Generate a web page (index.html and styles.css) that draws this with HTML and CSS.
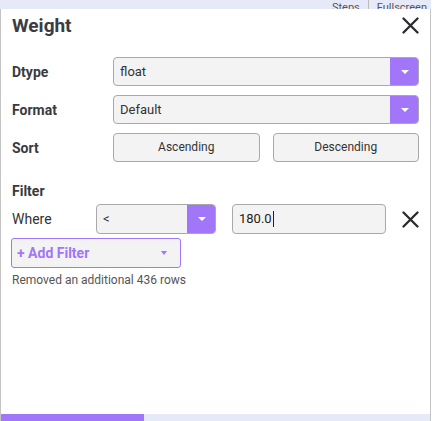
FILE: index.html
```html
<!DOCTYPE html>
<html>
<head>
<meta charset="utf-8">
<link rel="stylesheet" href="styles.css">
</head>
<body>
<div class="page">
  <div class="topbar">
    <span class="toplink">Steps</span>
    <span class="topsep"></span>
    <span class="toplink">Fullscreen</span>
  </div>
  <div class="panel">
    <div class="header">
      <h1 class="title">Weight</h1>
      <svg class="close" width="17" height="17" viewBox="0 0 17 17"><path d="M1.5 1.5L15.5 15.5M15.5 1.5L1.5 15.5" stroke="#2b2b2f" stroke-width="2.3" stroke-linecap="round"/></svg>
    </div>
    <div class="row">
      <div class="label">Dtype</div>
      <div class="select wide"><span class="seltext">float</span><span class="selbtn"><span class="tri"></span></span></div>
    </div>
    <div class="row">
      <div class="label">Format</div>
      <div class="select wide"><span class="seltext">Default</span><span class="selbtn"><span class="tri"></span></span></div>
    </div>
    <div class="row">
      <div class="label">Sort</div>
      <div class="sortbtns">
        <div class="btn">Ascending</div>
        <div class="btn">Descending</div>
      </div>
    </div>
    <div class="section">Filter</div>
    <div class="whererow">
      <div class="wlabel">Where</div>
      <div class="select op"><span class="seltext">&lt;</span><span class="selbtn"><span class="tri"></span></span></div>
      <div class="input">180.0<span class="caret"></span></div>
      <svg class="remove" width="17" height="17" viewBox="0 0 17 17"><path d="M1.5 1.5L15.5 15.5M15.5 1.5L1.5 15.5" stroke="#2b2b2f" stroke-width="2.3" stroke-linecap="round"/></svg>
    </div>
    <div class="addfilter"><span>+ Add Filter</span><span class="addtri"></span></div>
    <div class="note">Removed an additional 436 rows</div>
  </div>
  <div class="progress"><div class="progfill"></div></div>
</div>
</body>
</html>
```
FILE: styles.css
```css
html, body {
  margin: 0;
  padding: 0;
  background: #ffffff;
}
body {
  font-family: Roboto, "Noto Sans", sans-serif;
  color: #3a3a40;
  width: 438px;
  height: 421px;
  overflow: hidden;
}
.page {
  width: 431px;
  height: 421px;
  display: flex;
  flex-direction: column;
}
.topbar {
  height: 9px;
  background: #e6eaf8;
  display: flex;
  justify-content: flex-end;
  align-items: flex-end;
  gap: 8px;
  padding-right: 4px;
  overflow: hidden;
  font-size: 11px;
  line-height: 12px;
  color: #555;
}
.toplink {
  position: relative;
  top: 5px;
}
.topsep {
  width: 1px;
  height: 9px;
  background: #bbb;
}
.panel {
  flex: 1;
  border-left: 1px solid #c4c4c4;
  border-right: 1px solid #c4c4c4;
  padding: 0 11px 0 11px;
  display: flex;
  flex-direction: column;
}
.header {
  display: flex;
  justify-content: space-between;
  align-items: center;
  height: 32px;
}
.title {
  margin: 0;
  font-size: 19px;
  font-weight: 700;
  color: #3b3b42;
}
.row {
  display: flex;
  align-items: center;
  margin-top: 9px;
}
.header + .row {
  margin-top: 16px;
}
.label {
  width: 101px;
  font-size: 14px;
  font-weight: 700;
  color: #3a3a40;
}
.select {
  display: flex;
  height: 29px;
  box-sizing: border-box;
  border: 1px solid #a9a9a9;
  border-radius: 4px;
  background: #f3f3f3;
  overflow: hidden;
}
.wide {
  flex: 1;
}
.seltext {
  flex: 1;
  padding-left: 6px;
  font-size: 13px;
  line-height: 27px;
  color: #333;
}
.selbtn {
  width: 29px;
  margin: -1px -1px -1px 0;
  background: #a176f8;
  display: flex;
  align-items: center;
  justify-content: center;
}
.tri {
  width: 0;
  height: 0;
  border-left: 4px solid transparent;
  border-right: 4px solid transparent;
  border-top: 4px solid #ffffff;
}
.sortbtns {
  flex: 1;
  display: flex;
  gap: 13px;
}
.btn {
  flex: 1;
  height: 29px;
  box-sizing: border-box;
  border: 1px solid #a9a9a9;
  border-radius: 4px;
  background: #f3f3f3;
  font-size: 12px;
  line-height: 27px;
  text-align: center;
  color: #333;
}
.section {
  margin-top: 21px;
  font-size: 14px;
  font-weight: 700;
  color: #3a3a40;
}
.whererow {
  display: flex;
  align-items: center;
  margin-top: 5px;
}
.wlabel {
  width: 84px;
  font-size: 14px;
  color: #333;
}
.op {
  width: 120px;
  height: 30px;
}
.input {
  margin-left: 16px;
  width: 154px;
  height: 30px;
  box-sizing: border-box;
  border: 1px solid #a9a9a9;
  border-radius: 4px;
  background: #f3f3f3;
  font-size: 13px;
  line-height: 28px;
  padding-left: 6px;
  color: #222;
  display: flex;
  align-items: center;
}
.caret {
  display: inline-block;
  width: 1px;
  height: 16px;
  background: #222;
  margin-left: 1px;
}
.remove {
  margin-left: auto;
}
.addfilter {
  margin-top: 4px;
  width: 170px;
  height: 30px;
  box-sizing: border-box;
  border: 1px solid #a176f8;
  border-radius: 3px;
  background: #f3f3f3;
  display: flex;
  align-items: center;
  justify-content: space-between;
  padding: 0 13px 0 5px;
  margin-left: -1px;
  font-size: 14px;
  font-weight: 700;
  color: #a176f8;
}
.addtri {
  width: 0;
  height: 0;
  border-left: 3.5px solid transparent;
  border-right: 3.5px solid transparent;
  border-top: 4px solid #a176f8;
}
.note {
  margin-top: 5px;
  font-size: 12px;
  color: #555;
}
.progress {
  height: 7px;
  background: #e6eaf8;
  border-left: 1px solid #c4c4c4;
  border-right: 1px solid #c4c4c4;
}
.progfill {
  width: 143px;
  height: 100%;
  background: #a176f8;
}
```
